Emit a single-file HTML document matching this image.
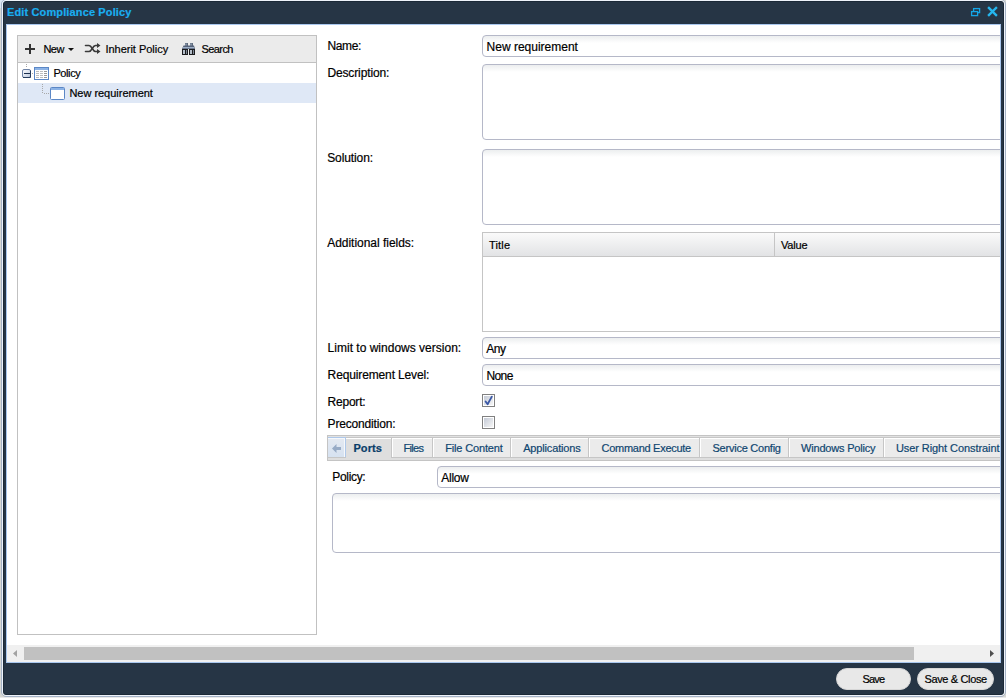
<!DOCTYPE html>
<html><head><meta charset="utf-8">
<style>
*{box-sizing:border-box;margin:0;padding:0}
html,body{width:1006px;height:698px;overflow:hidden;background:#d7d7d3;font-family:"Liberation Sans",sans-serif;font-size:11px;color:#000}
.a{position:absolute}
.t{white-space:nowrap;-webkit-text-stroke:0.2px currentColor}
#ring2{left:1px;top:-1px;width:1005px;height:698px;border:1px solid #a4b2c6;border-radius:5px}
#ring1{left:2px;top:0;width:1003px;height:696px;border:1px solid #eef3fa;border-radius:4px}
#win{left:3px;top:1px;width:1001px;height:694px;background:#263545;border:1px solid #1b2937;border-radius:3px}
#clip{left:6px;top:24px;width:995px;height:639px;background:#fff;border:1px solid #a9c7ee;overflow:hidden}
#inner{left:-7px;top:-25px;width:1006px;height:698px}
.inp{border:1px solid #b5b8c8;border-radius:4px;background:linear-gradient(#eceeef,#fff 7px)}
.btn{height:22px;border-radius:11px;background:#e8e8e8;border:1px solid #d6d6d6}
.tab{top:437px;height:21px;border:1px solid #c6c6c6;border-bottom:none;background:#ebebeb;box-shadow:inset 1px 1px 0 #fff}
</style></head><body>
<div class="a" style="left:0;top:0;width:12px;height:8px;background:#dce7f3"></div>
<div class="a" style="left:0;top:697px;width:1006px;height:1px;background:#e9e9e9"></div>
<div id="ring2" class="a"></div>
<div id="ring1" class="a"></div>
<div id="win" class="a"></div>
<!-- header tools -->
<svg class="a" style="left:966px;top:4px" width="36" height="16" viewBox="0 0 36 16">
  <rect x="7.6" y="4.6" width="6" height="4" fill="none" stroke="#14a6e8" stroke-width="1.3"/>
  <rect x="5.6" y="7.6" width="6" height="4" fill="#263545" stroke="#14a6e8" stroke-width="1.3"/>
  <path d="M22.9 3.9 L30.1 11.1 M30.1 3.9 L22.9 11.1" stroke="#25b6ee" stroke-width="2.3" stroke-linecap="square"/>
</svg>

<div id="clip" class="a">
<div id="inner" class="a">
<!-- tree panel -->
<div class="a" style="left:17px;top:35px;width:300px;height:600px;border:1px solid #c1c1c1;background:#fff"></div>
<div class="a" style="left:18px;top:36px;width:298px;height:27px;background:#ebebeb;border-bottom:1px solid #c1c1c1"></div>
<div class="a" style="left:18px;top:83px;width:298px;height:20px;background:#dfe8f6"></div>
<!-- toolbar icons -->
<svg class="a" style="left:18px;top:36px" width="200" height="26" viewBox="18 36 200 26">
  <path d="M25 49 H35 M30 44 V54" stroke="#333" stroke-width="2"/>
  <path d="M68 48 H74 L71 51 Z" fill="#111"/>
  <g fill="none" stroke="#3a3a3a" stroke-width="1.6" stroke-linecap="round">
    <path d="M85.5 45.5 H89 C92 45.5 92.5 51.5 95.5 51.5 H98"/>
    <path d="M85.5 51.5 H89 C92 51.5 92.5 45.5 95.5 45.5 H98"/>
  </g>
  <path d="M97 43 L100.5 45.5 L97 48 Z M97 49 L100.5 51.5 L97 54 Z" fill="#3a3a3a"/>
  <g>
    <rect x="185" y="43" width="3" height="4" fill="#5d6a7c"/>
    <rect x="190" y="43" width="3" height="4" fill="#5d6a7c"/>
    <rect x="185.5" y="43.5" width="1" height="2.5" fill="#a9b6c8"/>
    <rect x="190.5" y="43.5" width="1" height="2.5" fill="#a9b6c8"/>
    <path d="M182 49 L183.5 45.5 H194 L195 49 Z" fill="#56637a"/>
    <rect x="183" y="47" width="11" height="1.3" fill="#9eb0c8"/>
    <rect x="182" y="49" width="6" height="6" fill="#1c1c1e"/>
    <rect x="189" y="49" width="6" height="6" fill="#1c1c1e"/>
    <rect x="183" y="50" width="2" height="4" fill="#b4bec9"/>
    <rect x="186" y="50" width="1" height="4" fill="#7d8896"/>
    <rect x="190" y="50" width="2" height="4" fill="#b4bec9"/>
    <rect x="193" y="50" width="1" height="4" fill="#7d8896"/>
  </g>
</svg>
<!-- tree icons -->
<svg class="a" style="left:18px;top:63px" width="60" height="40" viewBox="18 63 60 40">
  <g fill="#a8a8a8">
    <rect x="26" y="64" width="1" height="1"/><rect x="26" y="66" width="1" height="1"/>
    <rect x="32" y="73" width="1" height="1"/>
    <rect x="42" y="84" width="1" height="1"/><rect x="42" y="86" width="1" height="1"/><rect x="42" y="88" width="1" height="1"/><rect x="42" y="90" width="1" height="1"/><rect x="42" y="92" width="1" height="1"/>
    <rect x="44" y="93" width="1" height="1"/><rect x="46" y="93" width="1" height="1"/><rect x="48" y="93" width="1" height="1"/>
  </g>
  <defs>
    <linearGradient id="mg" x1="0" y1="0" x2="1" y2="1"><stop offset="0" stop-color="#ffffff"/><stop offset="1" stop-color="#b9c6dc"/></linearGradient>
  </defs>
  <rect x="22.5" y="69.5" width="8" height="8" rx="1.5" fill="url(#mg)" stroke="#6d82a6"/>
  <path d="M30.5 70.5 V77.5 H23" fill="none" stroke="#263c5e"/>
  <rect x="24" y="73" width="6" height="1" fill="#1c3050"/>
  <rect x="34.5" y="67.5" width="14" height="12" fill="#fff" stroke="#5b87c6"/>
  <rect x="35" y="68" width="13" height="2" fill="#8cb3e6"/>
  <g fill="#bdbdbd">
    <rect x="36" y="71" width="3" height="1"/><rect x="40" y="71" width="3" height="1"/><rect x="44" y="71" width="3" height="1" fill="#9a9a9a"/>
    <rect x="36" y="73" width="3" height="1"/><rect x="40" y="73" width="3" height="1"/><rect x="44" y="73" width="3" height="1" fill="#9a9a9a"/>
    <rect x="36" y="75" width="3" height="1"/><rect x="40" y="75" width="3" height="1"/><rect x="44" y="75" width="3" height="1" fill="#9a9a9a"/>
    <rect x="36" y="77" width="3" height="1"/><rect x="40" y="77" width="3" height="1"/><rect x="44" y="77" width="3" height="1" fill="#9a9a9a"/>
  </g>
  <rect x="50.5" y="87.5" width="14" height="12" rx="1" fill="#fff" stroke="#5b87c6"/>
  <rect x="51" y="88" width="13" height="2" fill="#8cb3e6"/>
</svg>

<!-- inputs -->
<div class="a inp" style="left:482px;top:35px;width:530px;height:22px"></div>
<div class="a inp" style="left:482px;top:64px;width:530px;height:76px"></div>
<div class="a inp" style="left:482px;top:149px;width:530px;height:76px"></div>
<div class="a" style="left:482px;top:232px;width:530px;height:100px;border:1px solid #c5c5c5;background:#fff"></div>
<div class="a" style="left:483px;top:233px;width:530px;height:24px;background:linear-gradient(#fafafa,#e2e3e5);border-bottom:1px solid #c5c5c5"></div>
<div class="a" style="left:774px;top:233px;width:1px;height:23px;background:#c5c5c5"></div>
<div class="a inp" style="left:482px;top:337px;width:530px;height:22px"></div>
<div class="a inp" style="left:482px;top:364px;width:530px;height:22px"></div>
<!-- checkboxes -->
<svg class="a" style="left:482px;top:394px" width="13" height="36" viewBox="0 0 13 36">
  <defs><linearGradient id="cg" x1="0" y1="0" x2="1" y2="1"><stop offset="0" stop-color="#c4cad6"/><stop offset="1" stop-color="#f6f6f6"/></linearGradient></defs>
  <rect x="0.5" y="0.5" width="12" height="12" fill="#fff" stroke="#808080"/>
  <rect x="2" y="2" width="9" height="9" fill="url(#cg)"/>
  <path d="M3.6 7.4 L5.6 10.2 L9.8 2.6" fill="none" stroke="#3b58a6" stroke-width="1.8" stroke-linecap="round" stroke-linejoin="round"/>
  <rect x="0.5" y="22.5" width="12" height="12" fill="#fff" stroke="#808080"/>
  <rect x="2" y="24" width="9" height="9" fill="url(#cg)"/>
</svg>
<!-- tab bar -->
<div class="a" style="left:327px;top:435px;width:700px;height:26px;border:1px solid #c4c4c4;background:#e1e1e1"></div>
<div class="a" style="left:328px;top:437px;width:18px;height:21px;border-top:1px solid #aec8ea;border-right:1px solid #aec8ea;border-bottom:1px solid #c4c4c4;background:linear-gradient(#e4e9f1,#d6e2f1);box-shadow:inset -1px 1px 0 #f6f8fb"></div>
<svg class="a" style="left:328px;top:437px" width="18" height="20" viewBox="328 437 18 20">
  <path d="M332 448.5 L336.5 444 V447 H341 V450 H336.5 V453 Z" fill="#97abc6"/>
</svg>
<div class="a" style="left:346px;top:437px;width:45px;height:21px;background:#dedede;border-top:1px solid #c6c6c6;box-shadow:inset 0 1px 0 #fff"></div>
<div class="a tab" style="left:391px;width:42px"></div>
<div class="a tab" style="left:432px;width:80px"></div>
<div class="a tab" style="left:510px;width:80px"></div>
<div class="a tab" style="left:588px;width:113px"></div>
<div class="a tab" style="left:699px;width:91px"></div>
<div class="a tab" style="left:788px;width:97px"></div>
<div class="a tab" style="left:883px;width:140px"></div>
<div class="a" style="left:328px;top:457px;width:700px;height:3px;background:#dedede;border-top:1px solid #c6c6c6"></div>
<div class="a" style="left:346px;top:457px;width:45px;height:1px;background:#dedede"></div>
<!-- policy -->
<div class="a inp" style="left:437px;top:466px;width:600px;height:22px"></div>
<div class="a inp" style="left:332px;top:493px;width:700px;height:60px"></div>
<!-- hscroll -->
<div class="a" style="left:7px;top:645px;width:994px;height:17px;background:#f0f0f0"></div>
<div class="a" style="left:24px;top:647px;width:890px;height:13px;background:#c1c1c1"></div>
<svg class="a" style="left:7px;top:645px" width="994" height="17" viewBox="7 645 994 17">
  <path d="M17 650 V657 L13 653.5 Z" fill="#a3a3a3"/>
  <path d="M990 650 V657 L994 653.5 Z" fill="#505050"/>
</svg>
<div class="a t" style="left:43.4px;top:42.86px;font-size:11px;line-height:13px;letter-spacing:-0.508px">New</div>
<div class="a t" style="left:105.4px;top:42.86px;font-size:11px;line-height:13px;letter-spacing:-0.014px">Inherit Policy</div>
<div class="a t" style="left:201.6px;top:42.86px;font-size:11px;line-height:13px;letter-spacing:-0.612px">Search</div>
<div class="a t" style="left:53.4px;top:66.86px;font-size:11px;line-height:13px;letter-spacing:-0.389px">Policy</div>
<div class="a t" style="left:69.4px;top:86.86px;font-size:11px;line-height:13px;letter-spacing:-0.019px">New requirement</div>
<div class="a t" style="left:327.4px;top:39.03px;font-size:12px;line-height:14px;letter-spacing:-0.336px">Name:</div>
<div class="a t" style="left:327.4px;top:66.03px;font-size:12px;line-height:14px;letter-spacing:-0.124px">Description:</div>
<div class="a t" style="left:327.2px;top:151.03px;font-size:12px;line-height:14px;letter-spacing:-0.100px">Solution:</div>
<div class="a t" style="left:327.2px;top:236.03px;font-size:12px;line-height:14px;letter-spacing:-0.023px">Additional fields:</div>
<div class="a t" style="left:327.6px;top:341.03px;font-size:12px;line-height:14px;letter-spacing:0.009px">Limit to windows version:</div>
<div class="a t" style="left:327.6px;top:368.03px;font-size:12px;line-height:14px;letter-spacing:-0.133px">Requirement Level:</div>
<div class="a t" style="left:327.6px;top:395.03px;font-size:12px;line-height:14px;letter-spacing:-0.227px">Report:</div>
<div class="a t" style="left:327.6px;top:417.03px;font-size:12px;line-height:14px;letter-spacing:-0.171px">Precondition:</div>
<div class="a t" style="left:486.6px;top:40.03px;font-size:12px;line-height:14px;letter-spacing:-0.005px">New requirement</div>
<div class="a t" style="left:489.0px;top:238.86px;font-size:11px;line-height:13px;letter-spacing:0.156px">Title</div>
<div class="a t" style="left:781.0px;top:238.86px;font-size:11px;line-height:13px;letter-spacing:-0.157px">Value</div>
<div class="a t" style="left:486.2px;top:342.03px;font-size:12px;line-height:14px;letter-spacing:-0.494px">Any</div>
<div class="a t" style="left:486.4px;top:369.03px;font-size:12px;line-height:14px;letter-spacing:-0.562px">None</div>
<div class="a t" style="left:353.4px;top:441.86px;font-size:11px;line-height:13px;letter-spacing:0.119px;font-weight:bold;color:#0a3d69">Ports</div>
<div class="a t" style="left:403.5px;top:441.86px;font-size:11px;line-height:13px;letter-spacing:-0.684px;color:#0f4670">Files</div>
<div class="a t" style="left:445.2px;top:441.86px;font-size:11px;line-height:13px;letter-spacing:-0.156px;color:#0f4670">File Content</div>
<div class="a t" style="left:523.2px;top:441.86px;font-size:11px;line-height:13px;letter-spacing:-0.157px;color:#0f4670">Applications</div>
<div class="a t" style="left:601.5px;top:441.86px;font-size:11px;line-height:13px;letter-spacing:-0.275px;color:#0f4670">Command Execute</div>
<div class="a t" style="left:712.5px;top:441.86px;font-size:11px;line-height:13px;letter-spacing:-0.234px;color:#0f4670">Service Config</div>
<div class="a t" style="left:801.0px;top:441.86px;font-size:11px;line-height:13px;letter-spacing:-0.187px;color:#0f4670">Windows Policy</div>
<div class="a t" style="left:895.9px;top:441.86px;font-size:11px;line-height:13px;letter-spacing:-0.078px;color:#0f4670">User Right Constraint</div>
<div class="a t" style="left:332.3px;top:470.03px;font-size:12px;line-height:14px;letter-spacing:-0.324px">Policy:</div>
<div class="a t" style="left:441.2px;top:471.03px;font-size:12px;line-height:14px;letter-spacing:-0.222px">Allow</div>
</div>
</div>

<div class="a btn" style="left:836px;top:668px;width:75px"></div>
<div class="a btn" style="left:917px;top:668px;width:77px"></div>
<div class="a t" style="left:7.0px;top:5.86px;font-size:11px;line-height:13px;letter-spacing:0.131px;font-weight:bold;color:#1aaef0">Edit Compliance Policy</div>
<div class="a t" style="left:862.5px;top:672.86px;font-size:11px;line-height:13px;letter-spacing:-0.859px">Save</div>
<div class="a t" style="left:924.4px;top:672.86px;font-size:11px;line-height:13px;letter-spacing:-0.351px">Save &amp; Close</div>
</body></html>
